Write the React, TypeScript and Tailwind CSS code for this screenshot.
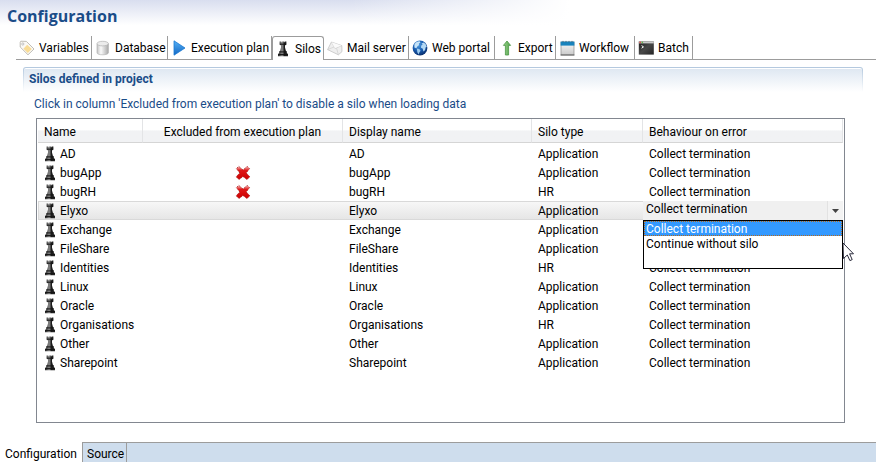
import React from "react";

type IconProps = { className?: string };

const TagIcon = ({ className }: IconProps) => (
  <svg viewBox="0 0 16 16" className={className} aria-hidden="true">
    <path d="M1.2 2.4 1.8 1.2 7.4 1.4 15 9 9 14.8 1.2 7z" fill="#fbf9f5" stroke="#b9b5ad" strokeWidth=".9" strokeLinejoin="round" />
    <path d="m8.2 4.8 4.6 4.3-4 3.9-4.4-4.3z" fill="#f9dc96" />
    <circle cx="3.8" cy="4" r="1.1" fill="#fff" stroke="#aaa" strokeWidth=".7" />
  </svg>
);

const DatabaseIcon = ({ className }: IconProps) => (
  <svg viewBox="0 0 16 16" className={className} aria-hidden="true">
    <defs>
      <linearGradient id="db" x1="0" x2="1">
        <stop offset="0" stopColor="#c4c4c4" />
        <stop offset=".35" stopColor="#fafafa" />
        <stop offset="1" stopColor="#a9a9a9" />
      </linearGradient>
    </defs>
    <path d="M2 3.8v9c0 1.2 2.5 2 5.7 2s5.7-.8 5.7-2v-9z" fill="url(#db)" stroke="#aaa" strokeWidth=".6" />
    <ellipse cx="7.7" cy="3.6" rx="5.7" ry="2.3" fill="#ececec" stroke="#b0b0b0" strokeWidth=".7" />
  </svg>
);

const PlayIcon = ({ className }: IconProps) => (
  <svg viewBox="0 0 16 16" className={className} aria-hidden="true">
    <defs>
      <linearGradient id="play" x1="0" y1="0" x2="0" y2="1">
        <stop offset="0" stopColor="#55b0f5" />
        <stop offset="1" stopColor="#1267c4" />
      </linearGradient>
    </defs>
    <path d="M3 .8 14 8 3 15.2z" fill="url(#play)" stroke="#1b78d2" strokeWidth=".8" strokeLinejoin="round" />
  </svg>
);

const SiloIcon = ({ className }: IconProps) => (
  <svg viewBox="0 0 16 16" className={className} aria-hidden="true">
    <defs>
      <linearGradient id="silo" x1="0" x2="1">
        <stop offset="0" stopColor="#222" />
        <stop offset=".42" stopColor="#8a8a8a" />
        <stop offset=".65" stopColor="#1c1c1c" />
        <stop offset="1" stopColor="#2a2a2a" />
      </linearGradient>
    </defs>
    <path
      d="M4.6.5h1.8v.8h.7V.5h1.8v.8h.7V.5h1.8v3l-1.4.9v2.2l.9 3.2.9.9v1.4l1.2.9v2.2H3v-2.2l1.2-.9v-1.4l.9-.9L6 6.6V4.4l-1.4-.9z"
      fill="url(#silo)"
    />
    <path d="M4.8 3.2h6.4M4.4 10.9h7.2M3.2 13.6h9.6" stroke="#141414" strokeWidth="1" />
  </svg>
);

const MailIcon = ({ className }: IconProps) => (
  <svg viewBox="0 0 16 16" className={className} aria-hidden="true">
    <path d="M.6 9.6 4.4 2 14.8 5.6l.2 6-3.6 3.2z" fill="#efefef" stroke="#bcbcbc" strokeWidth=".7" strokeLinejoin="round" />
    <path d="M4.4 2 8 8.6l6.8-3M.6 9.6 7 7M11.4 14.8l-1.8-6.6" fill="none" stroke="#cfcfcf" strokeWidth=".7" />
    <path d="M4.6 2.2 14.4 5.6 8 8z" fill="#fafafa" />
  </svg>
);

const GlobeIcon = ({ className }: IconProps) => (
  <svg viewBox="0 0 16 16" className={className} aria-hidden="true">
    <defs>
      <radialGradient id="globe" cx=".4" cy=".3" r=".75">
        <stop offset="0" stopColor="#4f9be0" />
        <stop offset=".55" stopColor="#1759ac" />
        <stop offset="1" stopColor="#082a66" />
      </radialGradient>
    </defs>
    <circle cx="8" cy="8" r="7.4" fill="url(#globe)" />
    <path d="M2.4 4.5C3.6 2.4 5.4 1.3 7.6 1.3l.8 1.3-1.6 1.2.3 1.3L5.3 6.6l-1 1.6-1.9-.8z" fill="#c5e3f8" />
    <path d="m4.8 8.6 2.5.4 1.3 1.8-1.3 1.6-.5 2-1.4-1.8z" fill="#9ccbef" />
    <path d="m9.6 3.4 2.2-1 1.9 1.9 1.1 2.6-1.1.3-.6 2.7-1.6 1.7-.9-3-1.6-.8.2-2.2 1.4-.8z" fill="#b4d9f4" />
  </svg>
);

const ExportIcon = ({ className }: IconProps) => (
  <svg viewBox="0 0 16 16" className={className} aria-hidden="true">
    <defs>
      <linearGradient id="export" x1="0" x2="1">
        <stop offset="0" stopColor="#9cd68e" />
        <stop offset="1" stopColor="#4f9f48" />
      </linearGradient>
    </defs>
    <path d="M9 1 12.6 5.4H10.6V15H7.4V5.4H5.4z" fill="url(#export)" stroke="#4a9645" strokeWidth=".8" strokeLinejoin="round" />
  </svg>
);

const CalendarIcon = ({ className }: IconProps) => (
  <svg viewBox="0 0 16 16" className={className} aria-hidden="true">
    <defs>
      <linearGradient id="cal" x1="0" y1="0" x2="0" y2="1">
        <stop offset="0" stopColor="#fafafa" />
        <stop offset="1" stopColor="#c9c9c9" />
      </linearGradient>
    </defs>
    <rect x="2" y="2" width="13" height="13" fill="url(#cal)" stroke="#8c8c8c" strokeWidth=".7" />
    <rect x="1.6" y="1.6" width="13.8" height="4" fill="#1883bd" />
    <path d="M4 .9v1.4M7 .9v1.4M10 .9v1.4M13 .9v1.4" stroke="#3b5f75" strokeWidth=".8" />
    <path d="M1.6 15h13.8" stroke="#555" strokeWidth=".9" />
  </svg>
);

const TerminalIcon = ({ className }: IconProps) => (
  <svg viewBox="0 0 16 16" className={className} aria-hidden="true">
    <defs>
      <linearGradient id="term" x1="0" y1="0" x2="1" y2="1">
        <stop offset="0" stopColor="#1c1c1c" />
        <stop offset=".5" stopColor="#484848" />
        <stop offset="1" stopColor="#242424" />
      </linearGradient>
    </defs>
    <rect x=".8" y="1.4" width="15" height="13.2" fill="url(#term)" />
    <rect x=".8" y="1.4" width="15" height="2" fill="#c9c9c9" />
    <circle cx="2.1" cy="2.4" r=".8" fill="#e13a2e" />
    <circle cx="4.3" cy="2.4" r=".8" fill="#5fb648" />
    <path d="m3.6 5.6 1.9 1.3-1.9 1.3" fill="none" stroke="#fff" strokeWidth="1" />
  </svg>
);

const CrossIcon = ({ className }: IconProps) => (
  <svg viewBox="0 0 16 16" className={className} role="img" aria-label="Excluded">
    <defs>
      <linearGradient id="cross" x1="0" y1="0" x2="0" y2="1">
        <stop offset="0" stopColor="#f9c4c4" />
        <stop offset=".3" stopColor="#e01818" />
        <stop offset="1" stopColor="#cc0000" />
      </linearGradient>
    </defs>
    <path
      d="M3.8 1.4 8 5l4.2-3.6 2.4 2.2L11.2 8l3.6 3.8-2.8 2.8L8 11.4l-4 3.2-2.8-2.8L4.8 8 1.4 3.6z"
      fill="url(#cross)"
      stroke="#a00808"
      strokeWidth=".8"
      strokeDasharray="1.3 .9"
    />
  </svg>
);

const tabs = [
  { label: "Variables", Icon: TagIcon, width: "w-[76px]" },
  { label: "Database", Icon: DatabaseIcon, width: "w-[76px]" },
  { label: "Execution plan", Icon: PlayIcon, width: "w-[104px]" },
  { label: "Silos", Icon: SiloIcon, width: "w-[52px]", active: true },
  { label: "Mail server", Icon: MailIcon, width: "w-[85px]" },
  { label: "Web portal", Icon: GlobeIcon, width: "w-[86px]" },
  { label: "Export", Icon: ExportIcon, width: "w-[61px]" },
  { label: "Workflow", Icon: CalendarIcon, width: "w-[79px]" },
  { label: "Batch", Icon: TerminalIcon, width: "w-[58px]" },
];

const silos = [
  { name: "AD", type: "Application" },
  { name: "bugApp", type: "Application", excluded: true },
  { name: "bugRH", type: "HR", excluded: true },
  { name: "Elyxo", type: "Application", editing: true },
  { name: "Exchange", type: "Application" },
  { name: "FileShare", type: "Application" },
  { name: "Identities", type: "HR" },
  { name: "Linux", type: "Application" },
  { name: "Oracle", type: "Application" },
  { name: "Organisations", type: "HR" },
  { name: "Other", type: "Application" },
  { name: "Sharepoint", type: "Application" },
];

const headCell = "border-r border-b border-[#e3e4e6] border-b-[#d5d5d5] p-0 px-1.5 pt-[2px] font-normal";

function BehaviourEditor() {
  return (
    <div className="relative h-[19px] bg-[#f0f0f0]">
      <select
        aria-label="Behaviour on error for Elyxo"
        defaultValue="Collect termination"
        className="block h-4 w-full appearance-none bg-transparent pl-[3px] leading-4 outline-none"
      >
        <option>Collect termination</option>
        <option>Continue without silo</option>
      </select>
      <span className="pointer-events-none absolute inset-y-0 right-0 flex w-4 items-center justify-center border-l border-[#e2e2e2] bg-[#f3f3f3]">
        <svg viewBox="0 0 7 4" className="h-1 w-[7px]" aria-hidden="true">
          <path d="M0 0h7L3.5 4z" fill="#444" />
        </svg>
      </span>
      <ul role="listbox" aria-label="Behaviours" className="absolute top-full left-0 z-10 h-[49px] w-full border border-black bg-white">
        <li role="option" aria-selected="true" className="h-[15px] bg-[#3399ff] pl-[2px] leading-4 text-white outline-1 -outline-offset-1 outline-dotted outline-[#b5691c]">
          Collect termination
        </li>
        <li role="option" aria-selected="false" className="h-[15px] pl-[2px] leading-4">
          Continue without silo
        </li>
      </ul>
      <svg viewBox="0 0 12 20" className="absolute top-[42px] left-full z-20 h-5 w-3" aria-hidden="true">
        <path d="M0 0 10.5 10.8H6.6L9.2 16.6 6.9 17.6 4.3 12 .5 15.5z" fill="#fff" stroke="#2b2b3c" strokeWidth="1" />
      </svg>
    </div>
  );
}

export default function App() {
  return (
    <div className="flex h-screen flex-col overflow-hidden bg-white font-[Roboto,'Noto_Sans',sans-serif] text-[12px] leading-4 text-black">
      <header className="h-9 shrink-0 bg-[linear-gradient(to_right,transparent_40%,white_65%),linear-gradient(to_bottom,#d9deef,white_70%)] px-[7px] pt-1">
        <h1 className="font-['Open_Sans','Noto_Sans',sans-serif] text-[16px] leading-6 font-bold text-[#1a4c88]">Configuration</h1>
      </header>

      <nav role="tablist" aria-label="Configuration sections" className="ml-4 flex h-6 shrink-0">
        {tabs.map(({ label, Icon, width, active }) => (
          <button
            key={label}
            type="button"
            role="tab"
            aria-selected={!!active}
            className={`flex shrink-0 items-center gap-1 border-r border-[#9c9c9c] whitespace-nowrap ${width} ${
              active ? "rounded-t-[3px] border-t border-l pl-[2px]" : "border-b pl-[3px]"
            }`}
          >
            <Icon className="size-4 shrink-0" />
            {label}
          </button>
        ))}
        <div className="flex-1 border-b border-[#9c9c9c]" />
      </nav>

      <section className="mt-[7px] mr-[13px] ml-[23px] flex min-h-0 flex-1 flex-col">
        <div className="rounded-t-[3px] bg-linear-to-b from-[#b3c8de] to-white px-px pt-px">
          <h2 className="h-6 rounded-t-[2px] border-t border-white bg-linear-to-b from-[#dfe8f2] to-white pl-[5px] leading-5 font-bold text-[#1a4c88]">
            Silos defined in project
          </h2>
        </div>
        <p className="mt-1 pl-[11px] text-[#1a4c88]">Click in column 'Excluded from execution plan' to disable a silo when loading data</p>

        <div className="mt-[6px] mr-[18px] ml-[13px] min-h-0 flex-1 border border-[#828790] p-px pt-0">
          <table className="w-full table-fixed border-separate border-spacing-0 text-left">
            <colgroup>
              <col className="w-[105px]" />
              <col className="w-[200px]" />
              <col className="w-[189px]" />
              <col className="w-[111px]" />
              <col />
            </colgroup>
            <thead>
              <tr className="h-6 bg-linear-to-b from-white from-45% to-[#f1f2f4] to-50%">
                <th className={headCell}>Name</th>
                <th className={`${headCell} text-center`}>Excluded from execution plan</th>
                <th className={headCell}>Display name</th>
                <th className={headCell}>Silo type</th>
                <th className={headCell}>Behaviour on error</th>
              </tr>
            </thead>
            <tbody className="before:block before:h-px">
              {silos.map((silo) => (
                <tr key={silo.name} className={silo.editing ? "h-[19px] bg-linear-to-b from-[#f8f8f8] to-[#e5e5e5] shadow-[inset_0_0_0_1px_#d9d9d9]" : "h-[19px]"}>
                  <td className="p-0 pl-1">
                    <span className="flex items-center gap-[2px]">
                      <SiloIcon className="size-4 shrink-0" />
                      {silo.name}
                    </span>
                  </td>
                  <td className="p-0">{silo.excluded && <CrossIcon className="mx-auto block size-4" />}</td>
                  <td className="p-0 pl-1.5">{silo.name}</td>
                  <td className="p-0 pl-1.5">{silo.type}</td>
                  <td className={silo.editing ? "p-0" : "p-0 pl-1.5"}>{silo.editing ? <BehaviourEditor /> : "Collect termination"}</td>
                </tr>
              ))}
            </tbody>
          </table>
        </div>
      </section>

      <footer role="tablist" aria-label="Editor pages" className="mt-[19px] flex h-5 shrink-0">
        <button type="button" role="tab" aria-selected="true" className="w-[82px] pt-1 pl-[5px] text-left">
          Configuration
        </button>
        <div className="flex flex-1 border-t border-l border-[#9c9c9c] bg-[#cedded]">
          <button type="button" role="tab" aria-selected="false" className="w-11 border-r border-[#9c9c9c] pt-[3px] pl-1 text-left">
            Source
          </button>
        </div>
      </footer>
    </div>
  );
}
